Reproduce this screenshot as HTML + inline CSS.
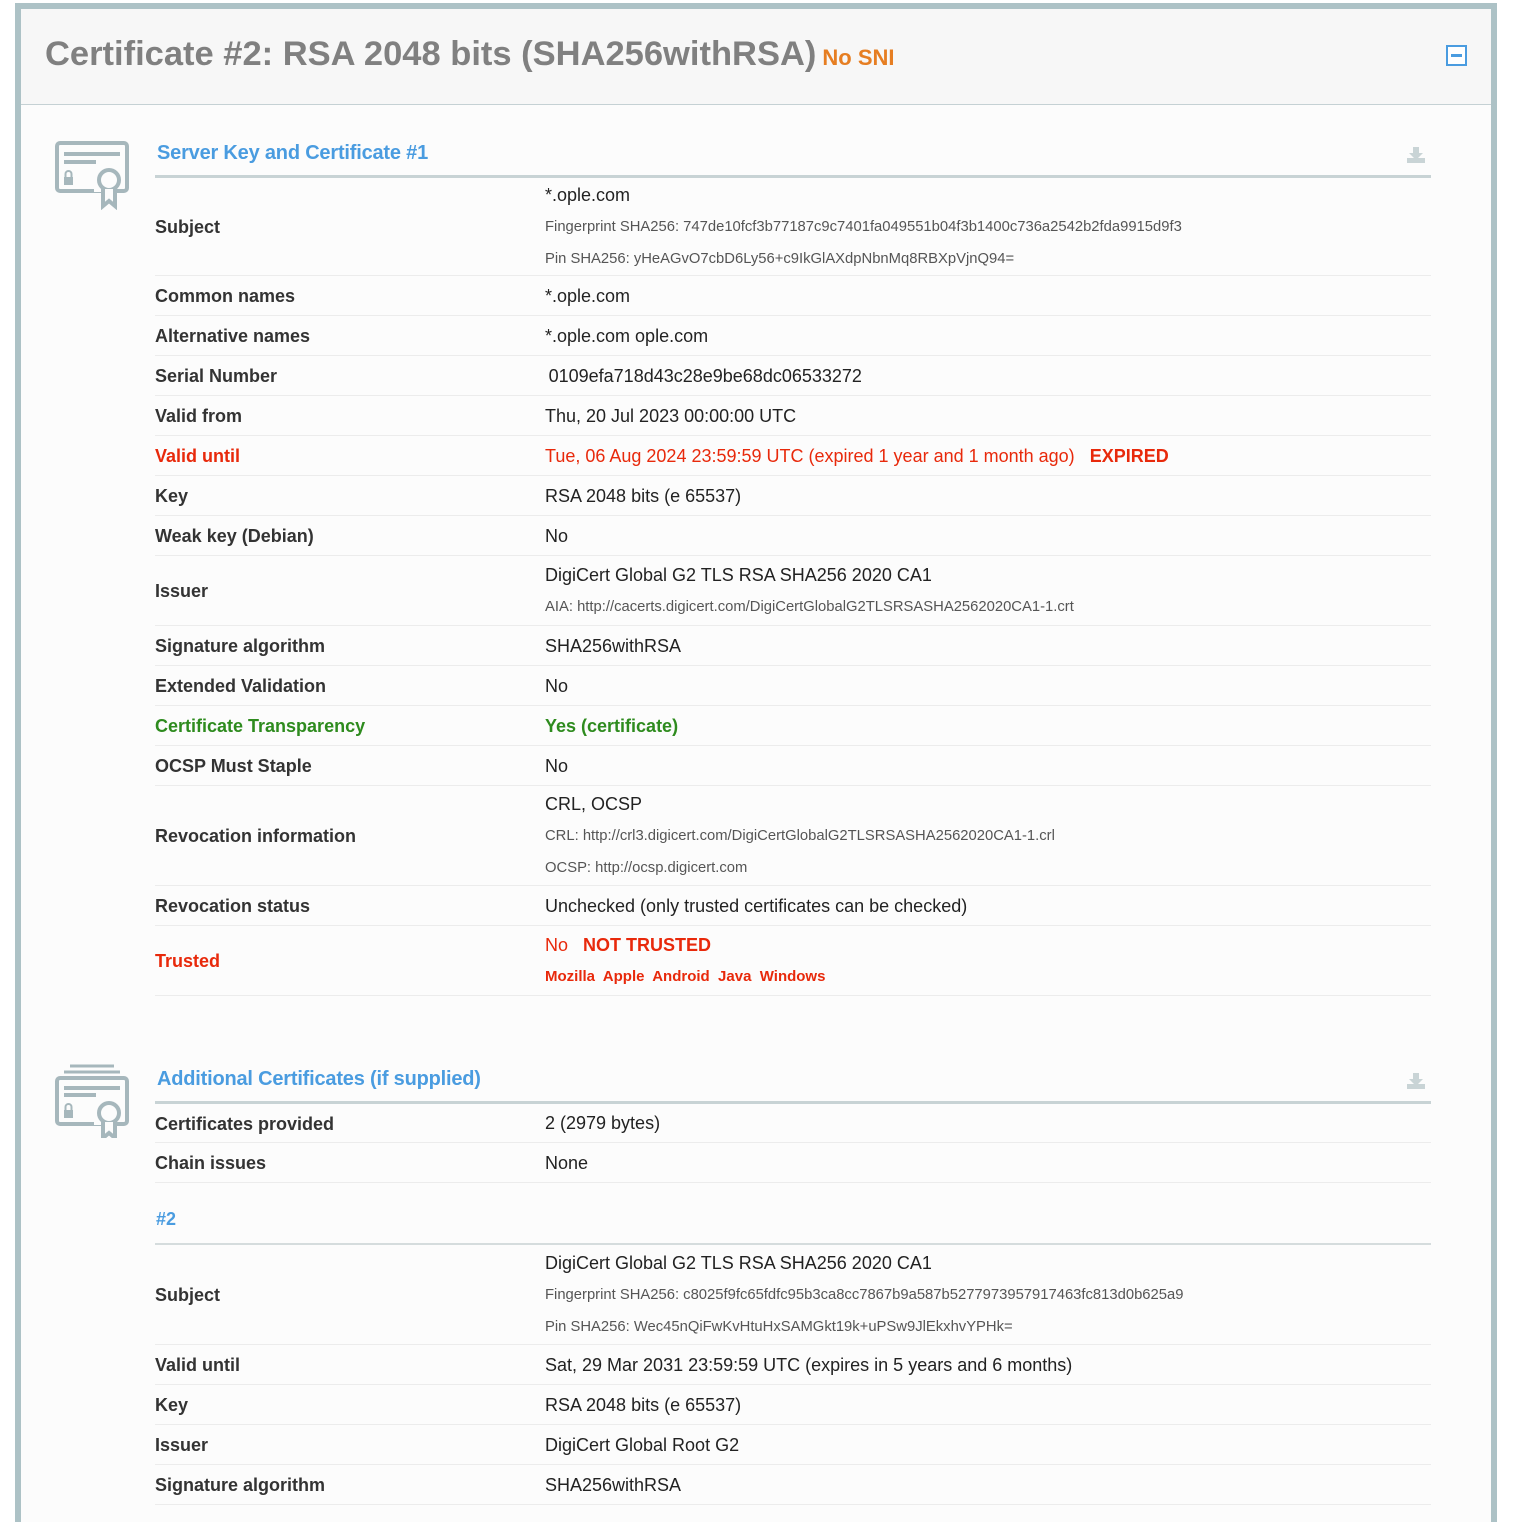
<!DOCTYPE html>
<html style="overflow:hidden;height:1522px"><head><meta charset="utf-8">
<style>
*{margin:0;padding:0;box-sizing:border-box}
body{width:1535px;height:1522px;background:#fff;font-family:"Liberation Sans",Arial,sans-serif;overflow:hidden;position:relative}
.box{position:absolute;left:15px;top:3px;width:1482px;height:1525px;border:6px solid #adc2c6;background:#fcfcfc;overflow:hidden}
.hdr{position:absolute;left:0;top:0;width:1470px;height:96px;background:#f7f7f7;border-bottom:1px solid #c5d1d4}
.hdr h1{position:absolute;left:24px;top:25px;font-size:34.5px;font-weight:bold;color:#808080;white-space:nowrap;line-height:40px}
.hdr h1 span{font-size:22px;color:#e67e22;margin-left:6px}
.tog{position:absolute;left:1425px;top:36px;width:21px;height:21px;border:2px solid #4a9ce0;background:#fff}
.tog i{position:absolute;left:3px;top:7px;width:11px;height:3px;background:#4a9ce0}
.sec{position:absolute;left:134px;width:1276px}
.st{height:53px;border-bottom:3px solid #c8d3d5;position:relative}
.st h2{position:absolute;left:2px;bottom:10px;font-size:20px;font-weight:bold;color:#4a9ce0;letter-spacing:-0.2px}
.dl{position:absolute;right:6px;bottom:12px}
.row{display:flex;align-items:center;border-bottom:1px solid #ececec;height:40px}
.h70{height:70px}.h100{height:100px}
.row .k{width:390px;font-size:18px;font-weight:bold;color:#333;padding-top:2px}
.row .v{font-size:18px;color:#222;line-height:30px}
.s{font-size:14.8px;color:#555}
.red{color:#e8290b!important}
.grn{color:#2e8b1e!important}
.icon{position:absolute;left:33px}
</style></head><body>
<div class="box">
<div class="hdr"><h1>Certificate #2: RSA 2048 bits (SHA256withRSA)<span>No SNI</span></h1><div class="tog"><i></i></div></div>

<svg class="icon" style="top:131px" width="76" height="70" viewBox="0 0 76 70" fill="none" stroke="#a6b7bc" stroke-width="4">
<rect x="3" y="3" width="70" height="48" rx="3"/>
<line x1="10" y1="14" x2="66" y2="14"/><line x1="10" y1="22" x2="42" y2="22"/>
<rect x="10" y="37" width="9" height="8" fill="#a6b7bc" stroke="none"/><path d="M11.5 37v-3a3 3 0 0 1 6 0v3" stroke-width="2"/>
<rect x="40" y="44" width="20" height="8" fill="#fcfcfc" stroke="none"/>
<circle cx="55" cy="40" r="10" fill="#fcfcfc"/>
<path d="M49 49v17l6-5 6 5v-17" fill="#fcfcfc"/>
</svg>

<div class="sec" style="top:116px">
<div class="st"><h2>Server Key and Certificate #1</h2><svg class="dl" width="18" height="16" viewBox="0 0 18 16"><path d="M6 0h6v6h4l-7 7-7-7h4z" fill="#c9d4d6"/><rect x="0" y="11" width="18" height="5" fill="#c9d4d6"/></svg></div>
<div class="row h100" style="height:98px"><div class="k">Subject</div><div class="v">*.ople.com<br><span class="s">Fingerprint SHA256: 747de10fcf3b77187c9c7401fa049551b04f3b1400c736a2542b2fda9915d9f3</span><br><span class="s">Pin SHA256: yHeAGvO7cbD6Ly56+c9IkGlAXdpNbnMq8RBXpVjnQ94=</span></div></div>
<div class="row"><div class="k">Common names</div><div class="v">*.ople.com</div></div>
<div class="row"><div class="k">Alternative names</div><div class="v">*.ople.com ople.com</div></div>
<div class="row"><div class="k">Serial Number</div><div class="v">&#8201;0109efa718d43c28e9be68dc06533272</div></div>
<div class="row"><div class="k">Valid from</div><div class="v">Thu, 20 Jul 2023 00:00:00 UTC</div></div>
<div class="row"><div class="k red">Valid until</div><div class="v red">Tue, 06 Aug 2024 23:59:59 UTC (expired 1 year and 1 month ago) &nbsp;&nbsp;<b>EXPIRED</b></div></div>
<div class="row"><div class="k">Key</div><div class="v">RSA 2048 bits (e 65537)</div></div>
<div class="row"><div class="k">Weak key (Debian)</div><div class="v">No</div></div>
<div class="row h70"><div class="k">Issuer</div><div class="v">DigiCert Global G2 TLS RSA SHA256 2020 CA1<br><span class="s">AIA: http://cacerts.digicert.com/DigiCertGlobalG2TLSRSASHA2562020CA1-1.crt</span></div></div>
<div class="row"><div class="k">Signature algorithm</div><div class="v">SHA256withRSA</div></div>
<div class="row"><div class="k">Extended Validation</div><div class="v">No</div></div>
<div class="row"><div class="k grn">Certificate Transparency</div><div class="v grn"><b>Yes (certificate)</b></div></div>
<div class="row"><div class="k">OCSP Must Staple</div><div class="v">No</div></div>
<div class="row h100"><div class="k">Revocation information</div><div class="v">CRL, OCSP<br><span class="s">CRL: http://crl3.digicert.com/DigiCertGlobalG2TLSRSASHA2562020CA1-1.crl</span><br><span class="s">OCSP: http://ocsp.digicert.com</span></div></div>
<div class="row"><div class="k">Revocation status</div><div class="v">Unchecked (only trusted certificates can be checked)</div></div>
<div class="row h70"><div class="k red">Trusted</div><div class="v red">No &nbsp;&nbsp;<b>NOT TRUSTED</b><br><b style="font-size:15px">Mozilla&nbsp; Apple&nbsp; Android&nbsp; Java&nbsp; Windows</b></div></div>
</div>

<svg class="icon" style="top:1053px" width="76" height="76" viewBox="0 0 76 76" fill="none" stroke="#a6b7bc" stroke-width="4">
<line x1="16" y1="4" x2="60" y2="4" stroke-width="3"/><line x1="10" y1="10" x2="66" y2="10" stroke-width="3"/>
<rect x="3" y="16" width="70" height="46" rx="3"/>
<line x1="10" y1="26" x2="66" y2="26"/><line x1="10" y1="33" x2="42" y2="33"/>
<rect x="10" y="48" width="9" height="8" fill="#a6b7bc" stroke="none"/><path d="M11.5 48v-3a3 3 0 0 1 6 0v3" stroke-width="2"/>
<rect x="40" y="55" width="20" height="8" fill="#fcfcfc" stroke="none"/>
<circle cx="55" cy="51" r="10" fill="#fcfcfc"/>
<path d="M49 60v16l6-5 6 5v-16" fill="#fcfcfc"/>
</svg>

<div class="sec" style="top:1042px">
<div class="st"><h2>Additional Certificates (if supplied)</h2><svg class="dl" width="18" height="16" viewBox="0 0 18 16"><path d="M6 0h6v6h4l-7 7-7-7h4z" fill="#c9d4d6"/><rect x="0" y="11" width="18" height="5" fill="#c9d4d6"/></svg></div>
<div class="row" style="height:39px"><div class="k">Certificates provided</div><div class="v">2 (2979 bytes)</div></div>
<div class="row"><div class="k">Chain issues</div><div class="v">None</div></div>
<div style="height:62px;border-bottom:2px solid #d5dcdd;position:relative"><span style="position:absolute;left:1px;top:26px;font-size:18px;font-weight:bold;color:#4a9ce0">#2</span></div>
<div class="row h100"><div class="k">Subject</div><div class="v">DigiCert Global G2 TLS RSA SHA256 2020 CA1<br><span class="s">Fingerprint SHA256: c8025f9fc65fdfc95b3ca8cc7867b9a587b5277973957917463fc813d0b625a9</span><br><span class="s">Pin SHA256: Wec45nQiFwKvHtuHxSAMGkt19k+uPSw9JlEkxhvYPHk=</span></div></div>
<div class="row"><div class="k">Valid until</div><div class="v">Sat, 29 Mar 2031 23:59:59 UTC (expires in 5 years and 6 months)</div></div>
<div class="row"><div class="k">Key</div><div class="v">RSA 2048 bits (e 65537)</div></div>
<div class="row"><div class="k">Issuer</div><div class="v">DigiCert Global Root G2</div></div>
<div class="row"><div class="k">Signature algorithm</div><div class="v">SHA256withRSA</div></div>
</div>
</div>
</body></html>
